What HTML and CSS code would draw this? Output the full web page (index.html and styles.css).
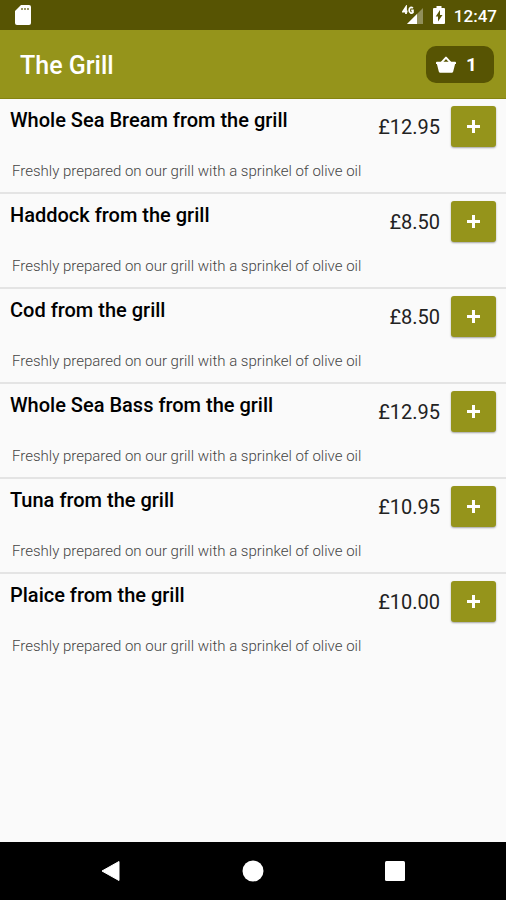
FILE: index.html
```html
<!DOCTYPE html>
<html lang="en">
<head>
<meta charset="utf-8">
<meta name="viewport" content="width=device-width, initial-scale=1">
<title>The Grill</title>
<link rel="stylesheet" href="styles.css">
</head>
<body>
<div class="status-bar">
  <svg class="sd-icon" width="16" height="20" viewBox="0 0 16 20" aria-hidden="true">
    <path fill="#fff" d="M6 0h8a2 2 0 0 1 2 2v16a2 2 0 0 1-2 2H2a2 2 0 0 1-2-2V6z"/>
    <path fill="#575403" d="M6 3h2v2H6zM9 3h2v2H9zM12 3h2v2h-2z" opacity=".6"/>
  </svg>
  <div class="status-icons">
    <svg width="22" height="20" viewBox="0 0 22 20" aria-hidden="true">
      <path fill="#fff" fill-opacity=".35" d="M21 3v16H5z"/>
      <path fill="#fff" d="M15 9v10H5z"/>
      <path fill="none" stroke="#fff" stroke-width="1.800" d="M4 9V2L1 6.500h4.500M10.800 3.200C9.500 1.600 7.200 2.200 7.200 5.200s2.600 3.600 3.700 2.200V5.500H9.200"/>
    </svg>
    <svg width="12" height="18" viewBox="0 0 12 18" aria-hidden="true">
      <path fill="#fff" d="M3.500 0h5v2H11a1 1 0 0 1 1 1v14a1 1 0 0 1-1 1H1a1 1 0 0 1-1-1V3a1 1 0 0 1 1-1h2.500z"/>
      <path fill="#575403" d="M7 4v5h2.500L5 15.500v-5H2.700z"/>
    </svg>
    <time class="clock">12:47</time>
  </div>
</div>
<header class="app-bar">
  <h1 class="title">The Grill</h1>
  <button class="basket" type="button" aria-label="Basket, 1 item">
    <svg width="20" height="17" viewBox="0 0 22 18" aria-hidden="true">
      <path fill="none" stroke="#fff" stroke-width="2.200" stroke-linejoin="round" d="M6 7l5-5.500L16 7"/>
      <path fill="#fff" d="M1 6h20a1 1 0 0 1 1 1v1.500h-1L19 16.500a1.500 1.500 0 0 1-1.500 1.500h-13A1.500 1.500 0 0 1 3 16.500L1 8.500H0V7a1 1 0 0 1 1-1z"/>
    </svg>
    <span>1</span>
  </button>
</header>
<main class="content">
  <ul class="menu">
    <li class="item">
      <h2 class="name">Whole Sea Bream from the grill</h2>
      <span class="price">£12.95</span>
      <button class="add" type="button" aria-label="Add Whole Sea Bream"><span class="plus"></span></button>
      <p class="desc">Freshly prepared on our grill with a sprinkel of olive oil</p>
    </li>
    <li class="item">
      <h2 class="name">Haddock from the grill</h2>
      <span class="price">£8.50</span>
      <button class="add" type="button" aria-label="Add Haddock"><span class="plus"></span></button>
      <p class="desc">Freshly prepared on our grill with a sprinkel of olive oil</p>
    </li>
    <li class="item">
      <h2 class="name">Cod from the grill</h2>
      <span class="price">£8.50</span>
      <button class="add" type="button" aria-label="Add Cod"><span class="plus"></span></button>
      <p class="desc">Freshly prepared on our grill with a sprinkel of olive oil</p>
    </li>
    <li class="item">
      <h2 class="name">Whole Sea Bass from the grill</h2>
      <span class="price">£12.95</span>
      <button class="add" type="button" aria-label="Add Whole Sea Bass"><span class="plus"></span></button>
      <p class="desc">Freshly prepared on our grill with a sprinkel of olive oil</p>
    </li>
    <li class="item">
      <h2 class="name">Tuna from the grill</h2>
      <span class="price">£10.95</span>
      <button class="add" type="button" aria-label="Add Tuna"><span class="plus"></span></button>
      <p class="desc">Freshly prepared on our grill with a sprinkel of olive oil</p>
    </li>
    <li class="item">
      <h2 class="name">Plaice from the grill</h2>
      <span class="price">£10.00</span>
      <button class="add" type="button" aria-label="Add Plaice"><span class="plus"></span></button>
      <p class="desc">Freshly prepared on our grill with a sprinkel of olive oil</p>
    </li>
  </ul>
</main>
<nav class="nav-bar" aria-label="System navigation">
  <button class="nav-button" type="button" aria-label="Back">
    <svg width="22" height="22" viewBox="0 0 22 22" aria-hidden="true"><path fill="#fff" stroke="#fff" stroke-linejoin="round" d="M19 1.500v19L2 11z"/></svg>
  </button>
  <button class="nav-button" type="button" aria-label="Home">
    <svg width="22" height="22" viewBox="0 0 22 22" aria-hidden="true"><circle cx="11" cy="11" r="10.500" fill="#fff"/></svg>
  </button>
  <button class="nav-button" type="button" aria-label="Recent apps">
    <svg width="22" height="22" viewBox="0 0 22 22" aria-hidden="true"><rect x="1" y="1" width="20" height="20" rx="1.500" fill="#fff"/></svg>
  </button>
</nav>
</body>
</html>
```
FILE: styles.css
```css
* {
  box-sizing: border-box;
}

body {
  margin: 0;
  min-height: 100vh;
  display: flex;
  flex-direction: column;
  background: #fafafa;
  color: #000;
  font-family: Roboto, "Liberation Sans", sans-serif;
}

h1, h2, p, ul {
  margin: 0;
  padding: 0;
}

button {
  border: 0;
  padding: 0;
  font: inherit;
  color: #fff;
  cursor: pointer;
}

svg {
  display: block;
}

.status-bar {
  display: flex;
  align-items: center;
  justify-content: space-between;
  height: 30px;
  padding: 0 9px 0 15px;
  background: #575403;
  color: #fff;
}

.status-icons {
  display: flex;
  align-items: center;
  gap: 9px;
}

.clock {
  padding-top: 2px;
  font-size: 17px;
  font-weight: 500;
  line-height: 28px;
}

.app-bar {
  display: flex;
  align-items: center;
  justify-content: space-between;
  height: 69px;
  padding: 0 12px 0 20px;
  background: #95941b;
  border-bottom: 1px solid #858410;
}

.title {
  padding-top: 3px;
  color: #fff;
  font-size: 25px;
  font-weight: 500;
  line-height: 32px;
}

.basket {
  display: flex;
  align-items: center;
  gap: 10px;
  height: 37px;
  padding: 0 17px 0 10px;
  border-radius: 10px;
  background: #575403;
  font-size: 19px;
  font-weight: 700;
}

.content {
  flex: 1;
}

.menu {
  list-style: none;
}

.item {
  display: grid;
  grid-template-columns: 1fr auto 45px;
  grid-template-rows: 41px 54px;
  column-gap: 11px;
  padding: 7px 10px 0 10px;
  height: 95px;
}

.item:not(:last-child) {
  border-bottom: 2px solid #e4e4e4;
}

.name {
  font-size: 20px;
  font-weight: 500;
  line-height: 28px;
}

.price {
  align-self: center;
  font-size: 20px;
  font-weight: 400;
  color: #222;
}

.add {
  display: grid;
  place-items: center;
  height: 41px;
  border-radius: 3px;
  background: #95941b;
  box-shadow: 0 1px 2px rgba(0, 0, 0, 0.35);
}

.plus {
  width: 13px;
  height: 13px;
  background:
    linear-gradient(#fff, #fff) center / 13px 3px no-repeat,
    linear-gradient(#fff, #fff) center / 3px 13px no-repeat;
}

.desc {
  grid-column: 1 / -1;
  padding: 13px 0 0 2px;
  font-size: 15px;
  font-weight: 300;
  line-height: 22px;
  color: #444;
}

.nav-bar {
  display: flex;
  justify-content: center;
  gap: 82px;
  height: 58px;
  background: #000;
}

.nav-button {
  display: grid;
  place-items: center;
  width: 60px;
  background: none;
}
```
